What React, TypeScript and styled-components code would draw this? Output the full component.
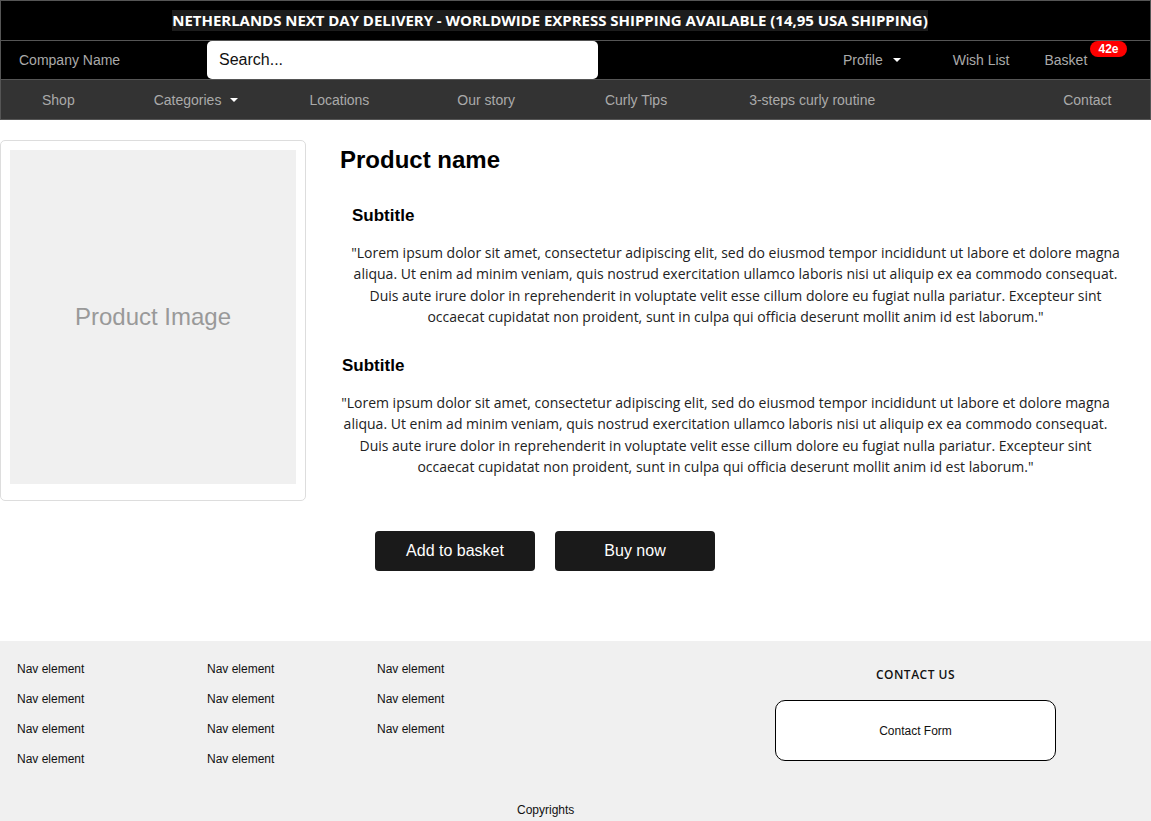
import React from 'react';
import styled, { createGlobalStyle } from 'styled-components';

const GlobalStyle = createGlobalStyle`
  * { box-sizing: border-box; }
  body {
    margin: 0;
    font-family: 'Liberation Sans', Arial, sans-serif;
    background: #fff;
  }
`

const Header = styled.header`
  border: 1px solid #555;
  border-bottom: none;
`

const Banner = styled.div`
  height: 40px;
  background: #000;
  display: flex;
  align-items: center;
  justify-content: center;
  padding-right: 51px;
  border-bottom: 1px solid #555;
  span {
    background: #1c1c1c;
    color: #fff;
    font-family: 'Open Sans', sans-serif;
    font-weight: 700;
    font-size: 15px;
    line-height: 21px;
    letter-spacing: -0.03px;
  }
`

const TopBar = styled.div`
  height: 39px;
  background: #000;
  display: flex;
  align-items: center;
  color: #aaa;
  font-size: 14px;
  border-bottom: 1px solid #555;
`

const Brand = styled.div`
  width: 206px;
  padding-left: 18px;
`

const Search = styled.input`
  width: 391px;
  height: 38px;
  border: none;
  border-radius: 5px;
  padding: 0 12px;
  font-family: 'Liberation Sans', Arial, sans-serif;
  font-size: 16px;
  color: #000;
  outline: none;
  &::placeholder { color: #111; }
`

const TopLink = styled.div<{ $ml: number }>`
  margin-left: ${p => p.$ml}px;
  position: relative;
  display: flex;
  align-items: center;
`

const Caret = styled.span`
  display: inline-block;
  margin-left: 10px;
  width: 0;
  height: 0;
  border-left: 4px solid transparent;
  border-right: 4px solid transparent;
  border-top: 4px solid #fff;
`

const Badge = styled.span`
  position: absolute;
  left: 46px;
  top: -11px;
  background: #f00;
  color: #fff;
  font-weight: 700;
  font-size: 12px;
  line-height: 16px;
  padding: 0 8px;
  border-radius: 8px;
`

const NavBar = styled.nav`
  height: 40px;
  background: #333;
  display: flex;
  align-items: center;
  color: #aaa;
  font-size: 14px;
  border-bottom: 1px solid #555;
`

const NavItem = styled.div<{ $ml: number }>`
  margin-left: ${p => p.$ml}px;
  display: flex;
  align-items: center;
  ${Caret} { margin-left: 9px; }
`

const Main = styled.main`
  display: flex;
  padding-top: 20px;
`

const ImageCard = styled.div`
  width: 306px;
  height: 361px;
  border: 1px solid #ddd;
  border-radius: 5px;
  padding: 9px 9px 16px 9px;
  flex-shrink: 0;
`

const ImageBox = styled.div`
  height: 100%;
  background: #f0f0f0;
  display: flex;
  align-items: center;
  justify-content: center;
  color: #999;
  font-size: 24px;
`

const Details = styled.div`
  padding-left: 34px;
  width: 815px;
`

const Title = styled.h1`
  margin: 6px 0 0;
  font-size: 24px;
  line-height: 28px;
  font-weight: 700;
  color: #000;
`

const Section = styled.section<{ $indent: number; $gap: number }>`
  padding-left: ${p => p.$indent}px;
  margin-top: ${p => p.$gap}px;
`

const Subtitle = styled.h2`
  margin: 0;
  font-size: 17px;
  line-height: 20px;
  font-weight: 700;
  color: #000;
`

const Para = styled.p`
  margin: 16px 0 0 -2px;
  width: 771px;
  font-family: 'Open Sans', sans-serif;
  font-size: 14px;
  line-height: 21.3px;
  text-align: center;
  color: #222;
`

const Actions = styled.div`
  display: flex;
  gap: 20px;
  padding-left: 375px;
  margin-top: 30px;
`

const Button = styled.button`
  width: 160px;
  height: 40px;
  border: none;
  border-radius: 4px;
  background: #1a1a1a;
  color: #fff;
  font-family: 'Liberation Sans', Arial, sans-serif;
  font-size: 16px;
  cursor: pointer;
`

const Footer = styled.footer`
  margin-top: 70px;
  background: #f0f0f0;
  height: 181px;
  padding: 21px 0 0 17px;
  display: flex;
  flex-direction: column;
`

const FooterTop = styled.div`
  display: flex;
`

const NavColumn = styled.ul<{ $w: number }>`
  list-style: none;
  margin: 0;
  padding: 0;
  width: ${p => p.$w}px;
  display: flex;
  flex-direction: column;
  gap: 16px;
  li {
    font-size: 12px;
    line-height: 14px;
    color: #111;
  }
`

const Contact = styled.div`
  margin-left: 228px;
  width: 281px;
  display: flex;
  flex-direction: column;
  align-items: center;
  padding-top: 4px;
`

const ContactTitle = styled.div`
  font-family: 'Open Sans', sans-serif;
  font-weight: 600;
  font-size: 12px;
  letter-spacing: 0.5px;
  color: #111;
`

const ContactForm = styled.div`
  margin-top: 17px;
  width: 281px;
  height: 61px;
  border: 1px solid #000;
  border-radius: 10px;
  background: #fff;
  display: flex;
  align-items: center;
  justify-content: center;
  font-size: 12px;
  color: #111;
`

const Copy = styled.div`
  margin-top: auto;
  margin-bottom: 5px;
  padding-left: 500px;
  font-size: 12px;
  color: #111;
`

const topLinks = [
  { label: 'Profile', ml: 245, caret: true },
  { label: 'Wish List', ml: 52 },
  { label: 'Basket', ml: 35, badge: '42e' },
]

const navLinks = [
  { label: 'Shop', ml: 41 },
  { label: 'Categories', ml: 79, caret: true },
  { label: 'Locations', ml: 71 },
  { label: 'Our story', ml: 88 },
  { label: 'Curly Tips', ml: 90 },
  { label: '3-steps curly routine', ml: 82 },
  { label: 'Contact', ml: 188 },
]

const lorem = '"Lorem ipsum dolor sit amet, consectetur adipiscing elit, sed do eiusmod tempor incididunt ut labore et dolore magna aliqua. Ut enim ad minim veniam, quis nostrud exercitation ullamco laboris nisi ut aliquip ex ea commodo consequat. Duis aute irure dolor in reprehenderit in voluptate velit esse cillum dolore eu fugiat nulla pariatur. Excepteur sint occaecat cupidatat non proident, sunt in culpa qui officia deserunt mollit anim id est laborum."'

const footerCols = [
  { w: 190, count: 4 },
  { w: 170, count: 4 },
  { w: 170, count: 3 },
]

const App = () => {
  return (
    <>
      <GlobalStyle />
      <Header>
        <Banner>
          <span>NETHERLANDS NEXT DAY DELIVERY - WORLDWIDE EXPRESS SHIPPING AVAILABLE (14,95 USA SHIPPING)</span>
        </Banner>
        <TopBar>
          <Brand>Company Name</Brand>
          <Search placeholder='Search...' />
          {topLinks.map(link => (
            <TopLink key={link.label} $ml={link.ml}>
              {link.label}
              {link.caret && <Caret />}
              {link.badge && <Badge>{link.badge}</Badge>}
            </TopLink>
          ))}
        </TopBar>
        <NavBar>
          {navLinks.map(link => (
            <NavItem key={link.label} $ml={link.ml}>
              {link.label}
              {link.caret && <Caret />}
            </NavItem>
          ))}
        </NavBar>
      </Header>

      <Main>
        <ImageCard>
          <ImageBox>Product Image</ImageBox>
        </ImageCard>
        <Details>
          <Title>Product name</Title>
          <Section $indent={12} $gap={32}>
            <Subtitle>Subtitle</Subtitle>
            <Para>{lorem}</Para>
          </Section>
          <Section $indent={2} $gap={29}>
            <Subtitle>Subtitle</Subtitle>
            <Para>{lorem}</Para>
          </Section>
        </Details>
      </Main>

      <Actions>
        <Button>Add to basket</Button>
        <Button>Buy now</Button>
      </Actions>

      <Footer>
        <FooterTop>
          {footerCols.map((col, i) => (
            <NavColumn key={i} $w={col.w}>
              {Array.from({ length: col.count }).map((_, j) => (
                <li key={j}>Nav element</li>
              ))}
            </NavColumn>
          ))}
          <Contact>
            <ContactTitle>CONTACT US</ContactTitle>
            <ContactForm>Contact Form</ContactForm>
          </Contact>
        </FooterTop>
        <Copy>Copyrights</Copy>
      </Footer>
    </>
  );
};

export default App;
